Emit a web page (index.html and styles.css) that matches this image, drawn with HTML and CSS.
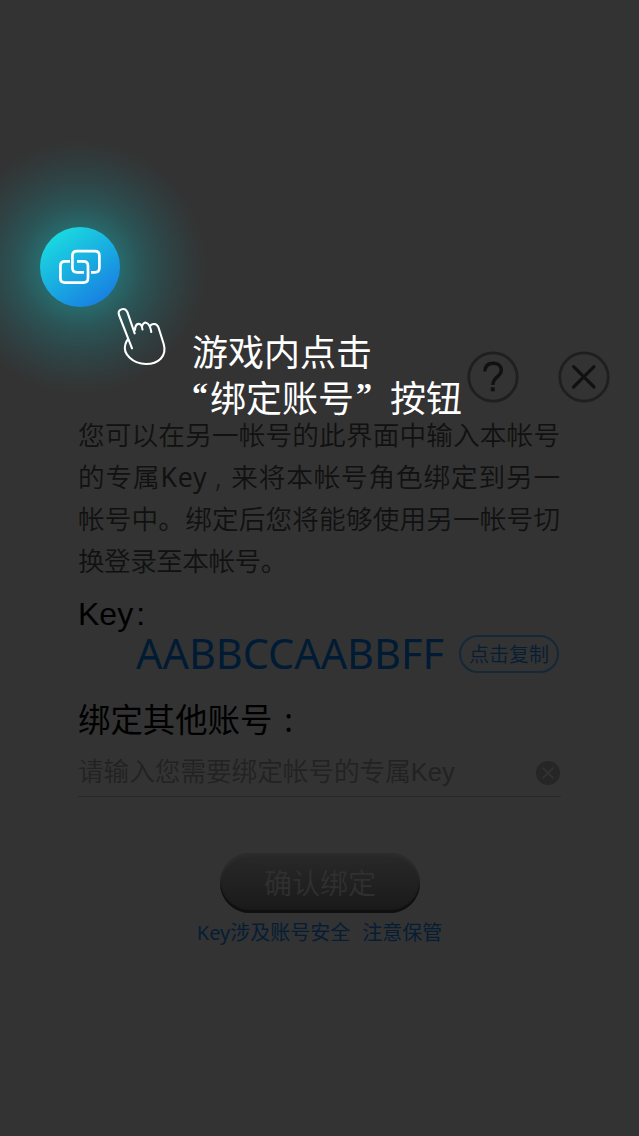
FILE: index.html
```html
<!DOCTYPE html>
<html lang="zh-CN">
<head>
<meta charset="utf-8">
<title>绑定账号</title>
<link rel="stylesheet" href="styles.css">
</head>
<body>
<main class="screen">
  <header class="toolbar">
    <svg class="tool" viewBox="0 0 52 52"><circle cx="26" cy="26" r="24.2" fill="none" stroke="#1f1f1f" stroke-width="2.8"/><path d="M17.8 20.5C18 14.8 21.5 12.2 26.2 12.2C31 12.2 34.3 15 34.3 19.3C34.3 25.5 25.8 26 25.8 34" fill="none" stroke="#111" stroke-width="3.4"/><rect x="23.8" y="36.3" width="4" height="4" fill="#111"/></svg>
    <svg class="tool" viewBox="0 0 52 52"><circle cx="26" cy="26" r="24.2" fill="none" stroke="#1f1f1f" stroke-width="2.8"/><path d="M15.6 15.6 36 36M36 15.6 15.6 36" fill="none" stroke="#111" stroke-width="3.2" stroke-linecap="round"/></svg>
  </header>
  <section class="panel">
    <p class="intro">
      <span class="line">您可以在另一帐号的此界面中输入本帐号</span>
      <span class="line">的专属<span class="word">Key</span><span class="comma">,</span>来将本帐号角色绑定到另一</span>
      <span class="line">帐号中。绑定后您将能够使用另一帐号切</span>
      <span class="line last">换登录至本帐号。</span>
    </p>
    <h2 class="key-label">Key<span class="colon">:</span></h2>
    <div class="key-row">
      <span class="key">AABBCCAABBFF</span>
      <button class="copy">点击复制</button>
    </div>
    <h2 class="other-label">绑定其他账号<span class="wide">:</span></h2>
    <div class="field">
      <span class="placeholder">请输入您需要绑定帐号的专属<span class="latin">Key</span></span>
      <svg class="clear" viewBox="0 0 24 24"><circle cx="12" cy="12" r="12" fill="#262626"/><path d="M6.5 6.5 17.5 17.5M17.5 6.5 6.5 17.5" stroke="#333" stroke-width="1.6"/></svg>
    </div>
    <button class="confirm">确认绑定</button>
    <p class="notice"><span>Key涉及账号安全</span><span>注意保管</span></p>
  </section>

  <aside class="guide">
    <div class="glow"></div>
    <svg class="link-button" viewBox="0 0 80 80">
      <defs><linearGradient id="disc" x1=".2" y1=".08" x2=".8" y2=".94"><stop offset="0" stop-color="#1ad9e0"/><stop offset="1" stop-color="#187fe2"/></linearGradient></defs>
      <circle cx="40" cy="40" r="40" fill="url(#disc)"/>
      <g fill="none" stroke="#fff" stroke-width="2.7">
        <path d="M30 34.4H25Q20.4 34.4 20.4 39V51Q20.4 55.6 25 55.6H43.4Q48 55.6 48 51V39Q48 34.4 43.4 34.4H37"/>
        <path d="M44 45.4H37Q32.4 45.4 32.4 40.8V28.7Q32.4 24.1 37 24.1H54.8Q59.4 24.1 59.4 28.7V40.8Q59.4 45.4 54.8 45.4H51"/>
      </g>
    </svg>
    <svg class="hand" viewBox="0 0 60 70" fill="none" stroke="#fff" stroke-width="2.1" stroke-linecap="round" stroke-linejoin="round">
      <path d="M22 47.3 9 14C7.2 8.3 14.5 5.7 17.3 10.9L24.7 32.3M25 29C25.2 21.3 31.7 20.5 32.5 28.5M32 25.5C33.5 19.5 39.5 20 41.3 31M39.8 25.5C41.5 22 47 22 48.5 26.5L53.7 43C57.3 55.5 48 63 36 63C23 63 12.5 53 15.3 43.5Q16 40.5 17.8 38.5"/>
    </svg>
    <p class="guide-text"><span>游戏内点击</span><span class="second"><span class="quote open">“</span>绑定账号<span class="quote close">”</span>按钮</span></p>
  </aside>
</main>
</body>
</html>
```

FILE: styles.css
```css
* { box-sizing: border-box; }
body { margin: 0; background: #333; }
p, h2 { margin: 0; font-weight: 400; }
button { font: inherit; padding: 0; }

.screen {
  position: relative;
  width: 639px;
  height: 1136px;
  padding-top: 350.5px;
  overflow: hidden;
  background: #333;
  font-family: "Noto Sans", "Noto Sans CJK SC", sans-serif;
  font-weight: 350;
}
.toolbar { display: flex; justify-content: flex-end; gap: 39px; padding-right: 29px; height: 63.5px; }
.tool { width: 52px; height: 52px; }
.panel { display: flex; flex-direction: column; padding: 0 78px 0 78px; }

.intro { color: #111; font-size: 26.6px; line-height: 42px; height: 168px; font-weight: 350; }
.line { display: block; height: 42px; padding-right: 1px; white-space: nowrap; text-align: justify; text-align-last: justify; text-justify: inter-character; }
.line.last { text-align-last: left; letter-spacing: -.5px; }
.word { font-weight: 400; letter-spacing: .8px; }
.comma { padding: 0 9px 0 8px; }

.key-label { margin-top: 11px; height: 40px; line-height: 42px; font-family: "Liberation Sans", sans-serif; font-size: 32px; color: #000; }
.colon { padding-left: 3px; }
.key-row { display: flex; align-items: center; justify-content: space-between; height: 42px; padding: 0 2px 0 58px; }
.key { font-weight: 400; font-size: 41.4px; line-height: 41px; height: 42px; color: #001b33; }
.copy { width: 100px; height: 38px; border: 2px solid #14283a; border-radius: 19px; background: none; color: #061d33; font-size: 20px; line-height: 36px; }

.other-label { margin-top: 19px; height: 48px; line-height: 50px; font-size: 32.4px; color: #000; font-weight: 400; }
.wide { padding-left: 12px; }
.field { display: flex; align-items: center; justify-content: space-between; height: 55px; padding-right: 1px; border-bottom: 1px solid #282828; }
.placeholder { font-size: 25.6px; line-height: 50px; margin-top: 5px; color: #222; }
.latin { font-family: "Liberation Sans", sans-serif; }
.clear { width: 24px; height: 24px; margin-top: 7px; }

.confirm { align-self: center; width: 200px; height: 60px; margin: 56px 0 0 1px; border: 0; border-radius: 30px; background: linear-gradient(#292929, #191919); box-shadow: inset 0 -3px 1px #101010, inset 0 3px 2px #2c2c2c; color: #303030; font-size: 28px; line-height: 60px; }
.notice { display: flex; justify-content: center; gap: 12px; margin-top: 5px; font-size: 20px; line-height: 30px; color: #061d33; }

/* Tutorial layer above the dimmed panel */
.guide { position: absolute; inset: 0; pointer-events: none; }
.glow { position: absolute; left: -60px; top: 127px; width: 280px; height: 280px; background: radial-gradient(circle, #267b7e 0, #28696b 40px, #2b5456 62px, #2e4648 84px, #313a3b 108px, rgba(51,51,51,0) 126px); }
.link-button { position: absolute; left: 40px; top: 227px; width: 80px; height: 80px; }
.hand { position: absolute; left: 110px; top: 301px; width: 60px; height: 70px; }
.guide-text { position: absolute; left: 192px; top: 327px; display: flex; flex-direction: column; font-family: "Noto Sans CJK SC", sans-serif; font-size: 36px; line-height: 46px; font-weight: 400; color: #fff; white-space: nowrap; }
.second { display: flex; }
.quote { width: 18px; font-family: "Liberation Serif", serif; font-weight: 700; font-size: 32px; line-height: 42px; }
.close { width: 36px; padding-left: 2px; }
```
